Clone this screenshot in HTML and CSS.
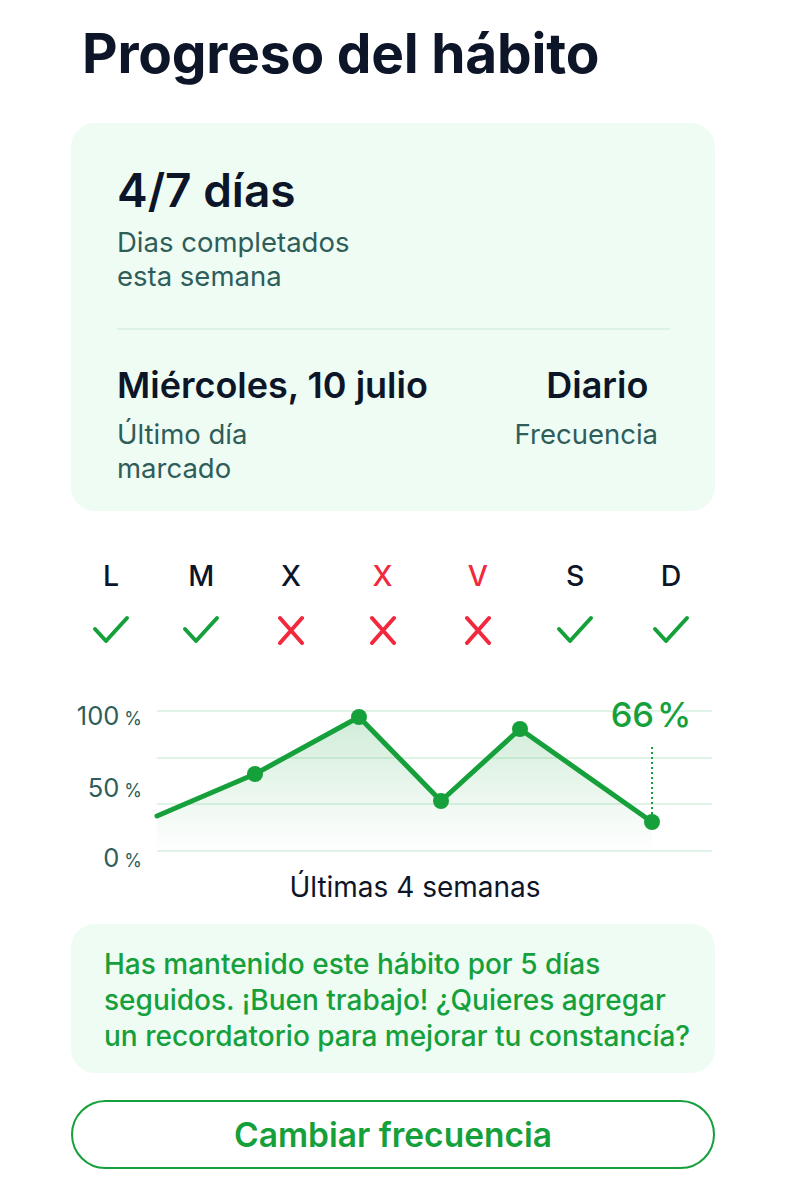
FILE: index.html
```html
<!DOCTYPE html>
<html lang="es">
<head>
<meta charset="utf-8">
<title>Progreso del hábito</title>
<link rel="stylesheet" href="styles.css">
</head>
<body>
<main class="page">
  <h1 class="title">Progreso del hábito</h1>

  <section class="card stats">
    <div class="big">4/7 días</div>
    <div class="label label-top">Dias completados<br>esta semana</div>
    <div class="divider"></div>
    <div class="stat-row">
      <div class="stat-left">
        <div class="mid">Miércoles, 10 julio</div>
        <div class="label">Último día<br>marcado</div>
      </div>
      <div class="stat-right">
        <div class="mid mid-right">Diario</div>
        <div class="label">Frecuencia</div>
      </div>
    </div>
  </section>

  <section class="week">
    <div class="day"><span class="letter">L</span><svg class="ico" viewBox="0 0 40 30"><path class="ok" d="M4 14 L15 26 L36 3"/></svg></div>
    <div class="day"><span class="letter">M</span><svg class="ico" viewBox="0 0 40 30"><path class="ok" d="M4 14 L15 26 L36 3"/></svg></div>
    <div class="day"><span class="letter">X</span><svg class="ico" viewBox="0 0 40 30"><path class="no" d="M9 3 L31 28 M31 3 L9 28"/></svg></div>
    <div class="day"><span class="letter red">X</span><svg class="ico" viewBox="0 0 40 30"><path class="no" d="M9 3 L31 28 M31 3 L9 28"/></svg></div>
    <div class="day"><span class="letter red">V</span><svg class="ico" viewBox="0 0 40 30"><path class="no" d="M9 3 L31 28 M31 3 L9 28"/></svg></div>
    <div class="day"><span class="letter">S</span><svg class="ico" viewBox="0 0 40 30"><path class="ok" d="M4 14 L15 26 L36 3"/></svg></div>
    <div class="day"><span class="letter">D</span><svg class="ico" viewBox="0 0 40 30"><path class="ok" d="M4 14 L15 26 L36 3"/></svg></div>
  </section>

  <section class="chart">
    <svg class="chart-svg" viewBox="60 690 660 180" width="660" height="180">
      <defs>
        <linearGradient id="fade" x1="0" y1="0" x2="0" y2="1">
          <stop offset="0" stop-color="#16a03b" stop-opacity="0.20"/>
          <stop offset="1" stop-color="#16a03b" stop-opacity="0"/>
        </linearGradient>
      </defs>
      <g class="grid">
        <line x1="157" y1="711" x2="712" y2="711"/>
        <line x1="157" y1="758" x2="712" y2="758"/>
        <line x1="157" y1="804" x2="712" y2="804"/>
        <line x1="157" y1="851" x2="712" y2="851"/>
      </g>
      <g class="axis">
        <text x="142" y="725" text-anchor="end">100<tspan class="pct" dx="5">%</tspan></text>
        <text x="142" y="797" text-anchor="end">50<tspan class="pct" dx="5">%</tspan></text>
        <text x="142" y="867" text-anchor="end">0<tspan class="pct" dx="5">%</tspan></text>
      </g>
      <polygon class="area" points="157,816 255,774 359,717 441,801 520,729 652,822 652,852 157,852"/>
      <polyline class="line" points="157,816 255,774 359,717 441,801 520,729 652,822"/>
      <line class="dash" x1="652" y1="747" x2="652" y2="814"/>
      <g class="dots">
        <circle cx="255" cy="774" r="8"/>
        <circle cx="359" cy="717" r="8"/>
        <circle cx="441" cy="801" r="8"/>
        <circle cx="520" cy="729" r="8"/>
        <circle cx="652" cy="822" r="8"/>
      </g>
      <text class="value" x="651" y="727" text-anchor="middle">66<tspan dx="3">%</tspan></text>
    </svg>
    <div class="caption">Últimas 4 semanas</div>
  </section>

  <section class="card note">
    <p>Has mantenido este hábito por 5 días<br>seguidos. ¡Buen trabajo! ¿Quieres agregar<br>un recordatorio para mejorar tu constancía?</p>
  </section>

  <button class="btn" type="button">Cambiar frecuencia</button>
</main>
</body>
</html>
```

FILE: styles.css
```css
* { box-sizing: border-box; }

html, body {
  margin: 0;
  padding: 0;
  background: #ffffff;
}

body {
  font-family: Inter, "Noto Sans", "Liberation Sans", sans-serif;
  color: #0d1528;
}

.page {
  width: 786px;
  padding: 0 71px;
  display: flex;
  flex-direction: column;
}

.title {
  margin: 24px 0 0 11px;
  font-size: 55px;
  line-height: 58px;
  font-weight: 700;
  letter-spacing: -0.2px;
  color: #0d1528;
}

.card {
  background: #eefcf4;
  border-radius: 24px;
}

.stats {
  margin-top: 41px;
  padding: 44px 45px 26px 46px;
}

.big {
  font-size: 46px;
  line-height: 46px;
  font-weight: 600;
  color: #0d1528;
}

.label {
  font-size: 27.5px;
  line-height: 34px;
  font-weight: 400;
  color: #2f5d5a;
}

.label-top {
  margin-top: 12px;
}

.divider {
  margin-top: 35px;
  height: 2px;
  background: #dcf2e5;
}

.stat-row {
  display: flex;
  justify-content: space-between;
  margin-top: 35px;
  padding-right: 12px;
}

.mid {
  font-size: 36px;
  line-height: 40px;
  font-weight: 600;
  color: #0d1528;
  margin-bottom: 12px;
}

.stat-right {
  text-align: center;
}

.mid-right {
  padding-left: 22px;
}

.week {
  margin: 49px -3px 0 -5.5px;
  display: grid;
  grid-template-columns: 91fr 89.5fr 90fr 93fr 97.5fr 97.5fr 94fr;
}

.day {
  display: flex;
  flex-direction: column;
  align-items: center;
}

.letter {
  font-size: 28.5px;
  line-height: 32px;
  font-weight: 500;
  color: #0d1528;
}

.letter.red {
  color: #f2283d;
}

.ico {
  margin-top: 23px;
  width: 40px;
  height: 30px;
  fill: none;
  stroke-width: 4;
  stroke-linecap: round;
  stroke-linejoin: round;
}

.ico .ok { stroke: #16a03b; }
.ico .no { stroke: #f2283d; }

.chart {
  margin-top: 45px;
  display: flex;
  flex-direction: column;
}

.chart-svg {
  display: block;
  margin-left: -11px;
  overflow: visible;
}

.grid line {
  stroke: #e0f3e7;
  stroke-width: 2;
}

.axis text {
  font-family: Inter, "Noto Sans", sans-serif;
  font-size: 25.5px;
  font-weight: 400;
  fill: #2f5d5a;
}

.axis .pct {
  font-size: 18px;
}

.area {
  fill: url(#fade);
}

.line {
  fill: none;
  stroke: #16a03b;
  stroke-width: 5;
  stroke-linejoin: round;
  stroke-linecap: round;
}

.dots circle {
  fill: #16a03b;
}

.dash {
  stroke: #16a03b;
  stroke-width: 2;
  stroke-dasharray: 2 3;
}

.value {
  font-family: Inter, "Noto Sans", sans-serif;
  font-size: 34.5px;
  font-weight: 500;
  fill: #16a03b;
}

.caption {
  margin-top: 2px;
  padding-left: 44px;
  text-align: center;
  font-size: 28px;
  line-height: 30px;
  color: #0d1528;
}

.note {
  margin-top: 22px;
  padding: 22px 10px 19px 33px;
}

.note p {
  margin: 0;
  font-size: 28px;
  line-height: 36px;
  font-weight: 500;
  color: #16a03b;
  white-space: nowrap;
}

.btn {
  margin-top: 27px;
  height: 69px;
  border: 2.5px solid #16a03b;
  border-radius: 35px;
  background: #ffffff;
  font-family: Inter, "Noto Sans", sans-serif;
  font-size: 33.5px;
  font-weight: 600;
  color: #16a03b;
  padding: 0;
}
```
